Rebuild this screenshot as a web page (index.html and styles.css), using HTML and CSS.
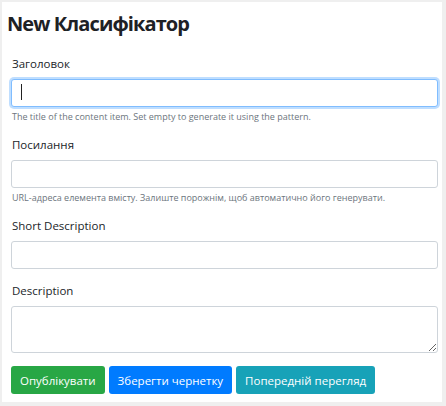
FILE: index.html
```html
<!DOCTYPE html>
<html lang="uk">
<head>
<meta charset="utf-8">
<title>New Класифікатор</title>
<link rel="stylesheet" href="styles.css">
</head>
<body>
<div class="panel">
  <h1 class="title">New Класифікатор</h1>
  <form class="form">
    <div class="group">
      <label class="label" for="f-title">Заголовок</label>
      <div class="field focused">
        <input class="control" id="f-title" type="text">
        <span class="caret"></span>
      </div>
      <div class="help">The title of the content item. Set empty to generate it using the pattern.</div>
    </div>
    <div class="group">
      <label class="label" for="f-slug">Посилання</label>
      <input class="control" id="f-slug" type="text">
      <div class="help">URL-адреса елемента вмісту. Залиште порожнім, щоб автоматично його генерувати.</div>
    </div>
    <div class="group">
      <label class="label" for="f-short">Short Description</label>
      <input class="control" id="f-short" type="text">
    </div>
    <div class="group">
      <label class="label" for="f-desc">Description</label>
      <textarea class="control area" id="f-desc"></textarea>
    </div>
    <div class="actions">
      <button class="btn btn-green" type="button">Опублікувати</button>
      <button class="btn btn-blue" type="button">Зберегти чернетку</button>
      <button class="btn btn-teal" type="button">Попередній перегляд</button>
    </div>
  </form>
</div>
</body>
</html>
```
FILE: styles.css
```css
html, body {
  margin: 0;
  padding: 0;
}
body {
  background: #efefef;
  font-family: "Open Sans", "Noto Sans", sans-serif;
  color: #212529;
}
.panel {
  margin: 2px 4px 0 2px;
  height: 400px;
  background: #fff;
  padding: 8px 4px 0 5px;
  box-sizing: border-box;
}
.title {
  margin: 0;
  font-size: 20px;
  line-height: 28px;
  font-weight: 700;
  color: #1e2125;
  letter-spacing: -0.9px;
}
.form {
  padding-left: 4px;
  margin-top: 17px;
}
.group {
  margin-bottom: 13px;
}
.label {
  display: block;
  font-size: 11.5px;
  line-height: 18px;
  margin-bottom: 6px;
  padding-left: 1px;
}
.field {
  position: relative;
}
.control {
  display: block;
  width: 100%;
  box-sizing: border-box;
  height: 28px;
  border: 1px solid #ced4da;
  border-radius: 3px;
  background: #fff;
  font-family: inherit;
  font-size: 12px;
  padding: 0 9px;
  margin: 0;
  outline: none;
}
.focused .control {
  border-color: #80bdff;
  box-shadow: 0 0 0 2px rgba(0, 123, 255, 0.25);
}
.caret {
  position: absolute;
  left: 10px;
  top: 5px;
  width: 1px;
  height: 16px;
  background: #222;
}
.area {
  height: 47px;
  padding: 4px 9px;
  resize: vertical;
}
.help {
  margin: 3px 0 3px;
  font-size: 9px;
  line-height: 13px;
  color: #6c757d;
  padding-left: 1px;
}
.actions {
  display: flex;
  gap: 4px;
  margin-top: 3px;
}
.btn {
  height: 28px;
  border: 0;
  border-radius: 3px;
  color: #fff;
  font-family: inherit;
  font-size: 11.5px;
  padding: 0 9px;
}
.btn-green { background: #28a745; }
.btn-blue { background: #007bff; }
.btn-teal { background: #17a2b8; }
```
